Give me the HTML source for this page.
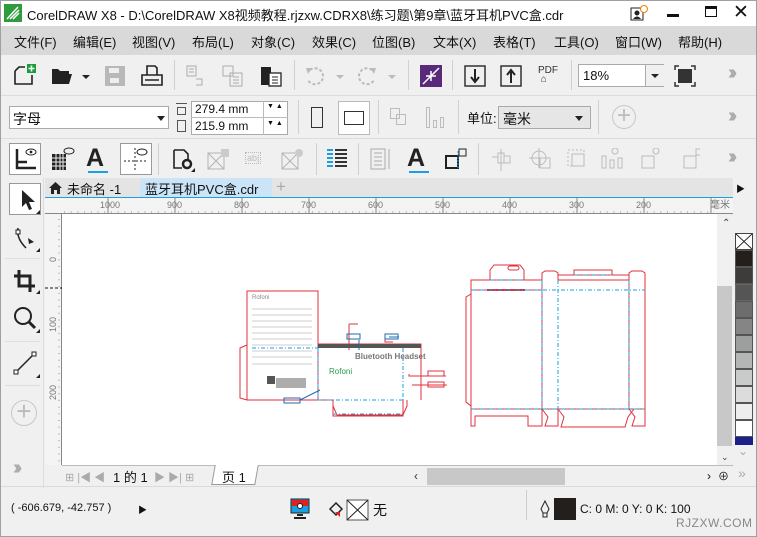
<!DOCTYPE html>
<html><head><meta charset="utf-8"><style>
*{margin:0;padding:0;box-sizing:border-box}
body{width:757px;height:537px;overflow:hidden;background:#f0f0f0;font-family:"Liberation Sans","Noto Sans CJK SC",sans-serif;font-size:12px;color:#111;position:relative}
.a{position:absolute}
.menu span{position:absolute;top:6px;font-size:13px}
.sep{position:absolute;width:1px;background:#d0d0d0}
.ic{position:absolute}
.chev{position:absolute;color:#aaa;font-size:20px;font-weight:bold;letter-spacing:-4px}
</style></head><body>
<div class="a" style="left:0;top:0;width:757px;height:537px;border:1px solid #a0a0a0"></div>
<!-- title -->
<div class="a" style="left:1px;top:1px;width:755px;height:25px;background:#fff"></div>
<svg class="a" style="left:4px;top:4px" width="18" height="18"><rect width="18" height="18" fill="#2e9c3c"/><path d="M3 15 L14 3 M6 15 L15 6 M9 15 L15 9" stroke="#fff" stroke-width="1.5"/></svg>
<div class="a" style="left:27px;top:5px;font-size:13px">CorelDRAW X8 - D:\CorelDRAW X8视频教程.rjzxw.CDRX8\练习题\第9章\蓝牙耳机PVC盒.cdr</div>
<svg class="a" style="left:630px;top:5px" width="20" height="17"><rect x="1" y="3" width="12" height="12" fill="none" stroke="#222"/><circle cx="7" cy="8" r="2.5" fill="#222"/><path d="M3 14 Q7 9 11 14Z" fill="#222"/><circle cx="14" cy="4" r="3.5" fill="#fff" stroke="#f08000"/></svg>
<div class="a" style="left:667px;top:14px;width:12px;height:3px;background:#111"></div>
<div class="a" style="left:705px;top:6px;width:12px;height:11px;border:1.5px solid #111;border-top-width:3px"></div>
<div class="a" style="left:733px;top:1px;font-size:19px">✕</div>
<!-- menu -->
<div class="a menu" style="left:1px;top:26px;width:755px;height:29px;background:#d9d9d9">
<span style="left:13px">文件(F)</span><span style="left:72px">编辑(E)</span><span style="left:131px">视图(V)</span><span style="left:191px">布局(L)</span><span style="left:250px">对象(C)</span><span style="left:311px">效果(C)</span><span style="left:371px">位图(B)</span><span style="left:432px">文本(X)</span><span style="left:492px">表格(T)</span><span style="left:553px">工具(O)</span><span style="left:614px">窗口(W)</span><span style="left:677px">帮助(H)</span></div>
<div class="a" style="left:1px;top:95px;width:755px;height:1px;background:#dcdcdc"></div>
<div class="a" style="left:1px;top:138px;width:755px;height:1px;background:#dcdcdc"></div>
<!-- toolbar 1 -->
<svg class="a" style="left:12px;top:63px" width="26" height="24"><path d="M3 8 L7 4 H13 M3 8 V21 H20 V12" fill="none" stroke="#222" stroke-width="1.6"/><rect x="15" y="1" width="9" height="9" fill="#1a9e3a"/><path d="M19.5 2.5v6M16.5 5.5h6" stroke="#fff" stroke-width="1.6"/></svg>
<svg class="a" style="left:50px;top:65px" width="42" height="22"><path d="M2 4 H8 L10 6 H19 V9 H6 L2 19Z M2 19 L6 9 H22 L19 19Z" fill="#222"/><path d="M32 10 h8 l-4 4z" fill="#222"/></svg>
<svg class="a" style="left:104px;top:65px" width="22" height="22"><rect x="1" y="1" width="20" height="20" fill="#b8b8b8"/><rect x="5" y="3" width="10" height="5" fill="#eee"/><rect x="6" y="13" width="9" height="5" fill="#eee"/></svg>
<svg class="a" style="left:140px;top:64px" width="24" height="24"><path d="M7 11 V2 H15 L17 4 V11 M2 11 H22 V21 H2Z M5 16 H19" fill="none" stroke="#222" stroke-width="1.6"/></svg>
<div class="sep" style="left:174px;top:60px;height:30px"></div>
<svg class="a" style="left:186px;top:65px" width="20" height="22" opacity=".35"><path d="M1 1h9v10h-9zM3 4h5M3 7h5M10 14h6v6h-6" fill="none" stroke="#333"/></svg>
<svg class="a" style="left:222px;top:65px" width="22" height="22" opacity=".35"><path d="M1 1h10v10h-10zM8 8h12v13h-12zM11 12h6M11 15h6M11 18h6" fill="none" stroke="#333"/></svg>
<svg class="a" style="left:260px;top:64px" width="22" height="24"><path d="M1 3h10v18h-10z" fill="#222"/><rect x="9" y="9" width="12" height="13" fill="#fff" stroke="#222" stroke-width="1.3"/><path d="M12 13h6M12 16h6M12 19h6" stroke="#222"/></svg>
<div class="sep" style="left:294px;top:60px;height:30px"></div>
<svg class="a" style="left:304px;top:66px" width="44" height="22" opacity=".3"><path d="M6 4 A8 8 0 1 1 4 14" fill="none" stroke="#444" stroke-width="2" stroke-dasharray="3 2"/><path d="M2 2 L8 2 L4 8z" fill="#444"/><path d="M32 9h8l-4 4z" fill="#444"/></svg>
<svg class="a" style="left:356px;top:66px" width="44" height="22" opacity=".3"><path d="M16 4 A8 8 0 1 0 18 14" fill="none" stroke="#444" stroke-width="2" stroke-dasharray="3 2"/><path d="M20 2 L14 2 L18 8z" fill="#444"/><path d="M32 9h8l-4 4z" fill="#444"/></svg>
<div class="sep" style="left:408px;top:60px;height:30px"></div>
<svg class="a" style="left:420px;top:65px" width="22" height="22"><rect width="22" height="22" fill="#5a2a7a"/><path d="M3 19 L19 3 M11 11 h-5 M11 11 v5 M11 11 h5 M11 11 v-5" stroke="#fff" stroke-width="1.5"/></svg>
<div class="sep" style="left:452px;top:60px;height:30px"></div>
<svg class="a" style="left:464px;top:64px" width="22" height="24"><rect x="1" y="2" width="20" height="20" fill="none" stroke="#333" stroke-width="1.5"/><path d="M11 5v12M7 13l4 5 4-5" fill="none" stroke="#222" stroke-width="2"/></svg>
<svg class="a" style="left:500px;top:64px" width="22" height="24"><rect x="1" y="2" width="20" height="20" fill="none" stroke="#333" stroke-width="1.5"/><path d="M11 19V7M7 11l4-5 4 5" fill="none" stroke="#222" stroke-width="2"/></svg>
<div class="a" style="left:538px;top:66px;font-size:10px;line-height:9px;color:#333">PDF<br>&nbsp;⌂</div>
<div class="sep" style="left:571px;top:60px;height:30px"></div>
<div class="a" style="left:578px;top:64px;width:86px;height:23px;background:#fff;border:1px solid #aaa"><span style="position:absolute;left:4px;top:3px;font-size:13px">18%</span><div style="position:absolute;left:66px;top:0;width:19px;height:21px;border-left:1px solid #aaa;background:#f0f0f0"></div><div style="position:absolute;left:72px;top:9px;border:4px solid transparent;border-top:4px solid #222"></div></div>
<svg class="a" style="left:674px;top:65px" width="22" height="22"><rect x="4" y="4" width="14" height="14" fill="#333"/><path d="M1 5V1h4M17 1h4v4M21 17v4h-4M5 21H1v-4" fill="none" stroke="#333" stroke-width="1.5"/></svg>
<div class="chev" style="left:728px;top:62px">››</div>
<!-- toolbar 2 -->
<div class="a" style="left:9px;top:106px;width:160px;height:23px;background:#fff;border:1px solid #aaa"><span style="position:absolute;left:3px;top:2px;font-size:14px">字母</span><div style="position:absolute;left:147px;top:9px;border:4px solid transparent;border-top:5px solid #222"></div></div>
<div class="a" style="left:176px;top:103px;width:11px;height:12px;border:1px solid #555;border-width:1px 0 0 0"></div>
<div class="a" style="left:177px;top:107px;width:9px;height:8px;border:1px solid #555"></div>
<div class="a" style="left:177px;top:120px;width:9px;height:12px;border:1px solid #555"></div>
<div class="a" style="left:191px;top:101px;width:97px;height:34px;background:#fff;border:1px solid #aaa"></div>
<div class="a" style="left:191px;top:117px;width:97px;height:1px;background:#bbb"></div>
<div class="a" style="left:263px;top:101px;width:1px;height:34px;background:#bbb"></div>
<div class="a" style="left:195px;top:102px;font-size:12px">279.4 mm</div>
<div class="a" style="left:195px;top:119px;font-size:12px">215.9 mm</div>
<div class="a" style="left:267px;top:103px;font-size:7px">▼ ▲</div>
<div class="a" style="left:267px;top:120px;font-size:7px">▼ ▲</div>
<div class="sep" style="left:298px;top:100px;height:34px"></div>
<div class="a" style="left:311px;top:107px;width:12px;height:21px;border:1.5px solid #333"></div>
<div class="a" style="left:338px;top:101px;width:32px;height:34px;background:#fff;border:1px solid #bbb"></div>
<div class="a" style="left:344px;top:111px;width:20px;height:14px;border:1.5px solid #333"></div>
<div class="sep" style="left:378px;top:100px;height:34px"></div>
<div class="a" style="left:390px;top:108px;width:10px;height:11px;border:1px solid #bbb"></div>
<div class="a" style="left:396px;top:114px;width:10px;height:11px;border:1px solid #bbb"></div>
<div class="a" style="left:426px;top:107px;width:4px;height:21px;border:1px solid #bbb"></div>
<div class="a" style="left:433px;top:120px;width:4px;height:8px;border:1px solid #bbb"></div>
<div class="a" style="left:440px;top:117px;width:4px;height:11px;border:1px solid #bbb"></div>
<div class="sep" style="left:458px;top:100px;height:34px"></div>
<div class="a" style="left:467px;top:108px;font-size:13px">单位:</div>
<div class="a" style="left:498px;top:106px;width:93px;height:23px;background:#e6e6e6;border:1px solid #aaa"><span style="position:absolute;left:4px;top:2px;font-size:14px">毫米</span><div style="position:absolute;left:76px;top:9px;border:4px solid transparent;border-top:5px solid #222"></div></div>
<div class="sep" style="left:598px;top:100px;height:34px"></div>
<div class="a" style="left:612px;top:105px;width:24px;height:24px;border:1.5px solid #c8c8c8;border-radius:50%;color:#bbb;font-size:24px;line-height:19px;text-align:center">+</div>
<div class="chev" style="left:728px;top:105px">››</div>
<!-- toolbar 3 -->
<div class="a" style="left:9px;top:143px;width:32px;height:32px;background:#fff;border:1px solid #999"></div>
<svg class="a" style="left:14px;top:146px" width="26" height="26"><path d="M3 3v19h19M3 16h10" fill="none" stroke="#222" stroke-width="2.5"/><ellipse cx="17" cy="6" rx="5" ry="3" fill="none" stroke="#222"/><circle cx="17" cy="6" r="1.4" fill="#222"/></svg>
<svg class="a" style="left:50px;top:146px" width="26" height="26"><path d="M2 8h14v16h-14z" fill="#222"/><path d="M2 12h14M2 16h14M2 20h14M6 8v16M10 8v16M13 8v16" stroke="#f0f0f0"/><ellipse cx="19" cy="5" rx="5" ry="3" fill="none" stroke="#222"/></svg>
<div class="a" style="left:86px;top:145px;font-size:25px;font-weight:bold;color:#222;line-height:26px">A</div>
<div class="a" style="left:88px;top:171px;width:20px;height:2px;background:#1aa0e0"></div>
<div class="a" style="left:120px;top:143px;width:32px;height:32px;background:#fff;border:1px solid #999"></div>
<svg class="a" style="left:122px;top:146px" width="28" height="26"><path d="M13 2v24M2 15h22" stroke="#222" stroke-dasharray="2 2"/><ellipse cx="20" cy="6" rx="5" ry="3" fill="none" stroke="#222"/></svg>
<div class="sep" style="left:158px;top:143px;height:32px"></div>
<svg class="a" style="left:170px;top:146px" width="26" height="28"><path d="M4 4h10l4 4v5M4 4v18h8" fill="none" stroke="#222" stroke-width="1.6"/><circle cx="17" cy="18" r="4" fill="none" stroke="#222" stroke-width="2.5"/><path d="M21 26h4v-4z" fill="#222"/></svg>
<svg class="a" style="left:207px;top:148px" width="24" height="24" opacity=".35"><path d="M1 5h16v16h-16zM1 5l16 16M17 5l-16 16" fill="none" stroke="#444"/><rect x="14" y="1" width="8" height="8" fill="#888"/></svg>
<div class="a" style="left:245px;top:152px;font-size:9px;color:#bbb;border:1px dotted #bbb;padding:0 1px">ab|</div>
<svg class="a" style="left:281px;top:148px" width="24" height="24" opacity=".35"><path d="M1 5h16v16h-16zM1 5l16 16M17 5l-16 16" fill="none" stroke="#444"/><circle cx="18" cy="5" r="4" fill="#888"/></svg>
<div class="sep" style="left:316px;top:143px;height:32px"></div>
<svg class="a" style="left:326px;top:148px" width="22" height="22"><path d="M1 2h6M1 6h6M1 10h6M1 14h6M1 18h6" stroke="#1aa0e0" stroke-width="2"/><path d="M9 2h12M9 6h12M9 10h12M9 14h12M9 18h12" stroke="#333" stroke-width="2"/></svg>
<div class="sep" style="left:358px;top:143px;height:32px"></div>
<svg class="a" style="left:370px;top:148px" width="22" height="22" opacity=".4"><rect x="1" y="1" width="14" height="20" fill="none" stroke="#444"/><path d="M4 5h8M4 9h8M4 13h8M4 17h8M19 1v20" stroke="#444"/></svg>
<div class="a" style="left:407px;top:145px;font-size:25px;font-weight:bold;color:#222;line-height:26px">A</div>
<div class="a" style="left:409px;top:171px;width:20px;height:2px;background:#1aa0e0"></div>
<svg class="a" style="left:444px;top:147px" width="24" height="24"><rect x="2" y="9" width="12" height="12" fill="none" stroke="#222" stroke-width="2"/><rect x="15" y="2" width="7" height="7" fill="none" stroke="#222"/><path d="M14 4v18" stroke="#1aa0e0" stroke-dasharray="2 1"/></svg>
<div class="sep" style="left:478px;top:143px;height:32px"></div>
<svg class="a" style="left:490px;top:148px" width="210" height="24" opacity=".3" fill="none" stroke="#444"><path d="M8 5h6v10h-6zM14 8h6v7h-6zM2 9h6M11 1v22"/><circle cx="49" cy="10" r="7"/><path d="M49 0v20M39 10h20"/><rect x="50" y="10" width="10" height="10"/><rect x="78" y="2" width="16" height="16" stroke-dasharray="2 2"/><rect x="82" y="6" width="12" height="12"/><path d="M112 8h4v12h-4zM120 12h4v8h-4zM128 10h4v10h-4z"/><circle cx="125" cy="3" r="3"/><rect x="152" y="8" width="12" height="12"/><circle cx="166" cy="3" r="3"/><rect x="194" y="8" width="12" height="12"/><rect x="206" y="1" width="6" height="6"/></svg>
<div class="chev" style="left:728px;top:146px">››</div>
<!-- left toolbox -->
<div class="a" style="left:43px;top:178px;width:1px;height:310px;background:#ddd"></div>
<div class="a" style="left:9px;top:183px;width:32px;height:32px;background:#fff;border:1px solid #999"></div>
<svg class="a" style="left:18px;top:188px" width="22" height="26"><path d="M4 2v17l4-4 3 7 3-1-3-7h6z" fill="#222"/><path d="M22 22v4h-4z" fill="#222"/></svg>
<svg class="a" style="left:12px;top:224px" width="30" height="28"><path d="M6 4 Q4 14 14 24" fill="none" stroke="#222" stroke-width="1.5"/><rect x="4" y="6" width="4" height="4" fill="#fff" stroke="#222"/><path d="M16 14l6 4-5 2z" fill="#222"/><path d="M28 24v4h-4z" fill="#222"/></svg>
<div class="a" style="left:5px;top:258px;width:35px;height:1px;background:#ddd"></div>
<svg class="a" style="left:12px;top:268px" width="30" height="28"><path d="M7 2v16h16M2 8h16v16" fill="none" stroke="#222" stroke-width="3"/><path d="M28 22v4h-4z" fill="#222"/></svg>
<svg class="a" style="left:12px;top:305px" width="30" height="28"><circle cx="11" cy="11" r="8" fill="none" stroke="#222" stroke-width="2"/><path d="M17 17l6 6" stroke="#222" stroke-width="3"/><path d="M28 24v4h-4z" fill="#222"/></svg>
<div class="a" style="left:5px;top:341px;width:35px;height:1px;background:#ddd"></div>
<svg class="a" style="left:12px;top:350px" width="30" height="28"><path d="M4 22L22 4" stroke="#222" stroke-width="1.5"/><rect x="2" y="20" width="4" height="4" fill="#fff" stroke="#222"/><rect x="20" y="2" width="4" height="4" fill="#fff" stroke="#222"/><path d="M28 24v4h-4z" fill="#222"/></svg>
<div class="a" style="left:5px;top:385px;width:35px;height:1px;background:#ddd"></div>
<div class="a" style="left:11px;top:400px;width:26px;height:26px;border:1.5px solid #c8c8c8;border-radius:50%;color:#bbb;font-size:26px;line-height:21px;text-align:center">+</div>
<div class="chev" style="left:13px;top:457px">››</div>
<!-- tabs -->
<div class="a" style="left:45px;top:178px;width:688px;height:19px;background:#e4e4e4"></div>
<svg class="a" style="left:48px;top:181px" width="15" height="14"><path d="M1 7L7.5 1 14 7h-2v6H9V9H6v4H3V7z" fill="#222"/></svg>
<div class="a" style="left:67px;top:179px;font-size:13px">未命名 -1</div>
<div class="a" style="left:140px;top:178px;width:132px;height:19px;background:#cce4f7"></div>
<div class="a" style="left:145px;top:179px;font-size:13px">蓝牙耳机PVC盒.cdr</div>
<div class="a" style="left:276px;top:178px;color:#aaa;font-size:17px;line-height:18px">+</div>
<div class="a" style="left:45px;top:197px;width:688px;height:1px;background:#1aa0e0"></div>
<!-- rulers -->
<div class="a" style="left:45px;top:198px;width:688px;height:16px;background:#f4f4f4;border-bottom:1px solid #888"></div>
<div class="a" style="left:45px;top:214px;width:17px;height:251px;background:#f4f4f4;border-right:1px solid #888"></div>
<svg class="a" style="left:45px;top:198px" width="688" height="16" font-family="Liberation Sans" font-size="9" fill="#777">
<text x="55" y="10">1000</text><text x="122" y="10">900</text><text x="189" y="10">800</text><text x="256" y="10">700</text><text x="323" y="10">600</text><text x="390" y="10">500</text><text x="457" y="10">400</text><text x="524" y="10">300</text><text x="591" y="10">200</text><text x="665" y="10" font-size="10">毫米</text>
<path d="M63 0v16M130 0v16M197 0v16M264 0v16M331 0v16M398 0v16M465 0v16M532 0v16M599 0v16M666 0v16" stroke="#888"/>
<path d="M19 14h650" stroke="#888" stroke-dasharray="1 5.7"/></svg>
<svg class="a" style="left:45px;top:214px" width="17" height="251" font-family="Liberation Sans" font-size="9" fill="#777">
<text transform="translate(11,48) rotate(-90)">0</text><text transform="translate(11,118) rotate(-90)">100</text><text transform="translate(11,186) rotate(-90)">200</text>
<path d="M14 5v245" stroke="#888" stroke-dasharray="1 5.7"/><path d="M0 74h17" stroke="#111" stroke-dasharray="3 2"/></svg>
<!-- canvas -->
<div class="a" style="left:62px;top:214px;width:655px;height:251px;background:#fff"></div>
<svg class="a" style="left:62px;top:214px" width="655" height="251" fill="none">
<g stroke="#e0303c" stroke-width="1">
<path d="M185 77h71v109h-71zM185 131l-7 3v50l7 2"/>
<path d="M256 130h103v56"/>
<path d="M256 186h15v6l4 9h66l4-9v-6"/>
<path d="M271 186v16h70v-16"/>
<path d="M287 110v26M287 110h9M323 121v7h8M347 160v2h37M350 171h35"/>
</g>
<rect x="256" y="130" width="103" height="4" fill="#555"/>
<g stroke="#1aa0e0" stroke-dasharray="4 2 1 2">
<path d="M256 134v52M256 186h85M271 200h70M341 134v52M190 134h66"/>
</g>
<g stroke="#1a6eb0"><rect x="285" y="120" width="13" height="5"/><rect x="323" y="120" width="13" height="5"/><rect x="222" y="184" width="16" height="5"/><path d="M238 186l20-10M297 126v10M337 123h-10"/></g>
<g stroke="#e0303c"><rect x="366" y="157" width="16" height="5"/><rect x="366" y="168" width="16" height="5"/></g>
<text x="293" y="145" font-size="8" font-family="Liberation Sans" font-weight="bold" fill="#777">Bluetooth Headset</text>
<text x="267" y="160" font-size="8" font-family="Liberation Sans" fill="#2a9a4a">Rofoni</text>
<text x="190" y="85" font-size="6" font-family="Liberation Sans" fill="#888">Rofoni</text>
<g stroke="#999" stroke-width=".6"><path d="M190 95h60M190 101h60M190 107h60M190 113h60M190 119h60M190 125h60M190 131h60M190 137h60M190 143h60M190 150h60"/></g>
<g stroke="#333" stroke-width=".8"><path d="M215 164v10M217 164v10M219 164v10M221 164v10M223 164v10M225 164v10M227 164v10M229 164v10M231 164v10M233 164v10M235 164v10M237 164v10M239 164v10M241 164v10M243 164v10"/></g>
<rect x="205" y="162" width="8" height="8" fill="#555"/>
<g stroke="#e0303c">
<path d="M409 66h71v129h-71zM409 76h71"/>
<path d="M409 80l-5 3v105l5 4"/>
<path d="M428 66v-10l4-5h26l4 5v10"/>
<path d="M480 66v-7l3-2h10l3 2v7M480 195h16M496 66h71M496 195h71v-129"/>
<path d="M512 61v-5h38v5M496 61h71"/>
<path d="M567 66v-7l3-2h10l3 2v7M583 66v129h-16"/>
<path d="M409 195v17h4v-10h53v10h14v-17"/>
<path d="M480 195l6 8-3 9h13v-17M496 195l6 8-3 10h64l3-10 6-8M567 195l6 8-3 9h13v-17"/>
<rect x="446" y="52" width="11" height="4" rx="2"/>
</g>
<path d="M425 76h38" stroke="#e0303c" stroke-width="2"/>
<g stroke="#1aa0e0" stroke-dasharray="4 2 1 2"><path d="M409 76h174M409 195h174M480 66v129M496 66v129M567 66v129M428 66h34M512 61h38"/></g>
</svg>
<!-- right scrollbar & palette -->
<div class="a" style="left:717px;top:214px;width:16px;height:251px;background:#f0f0f0"></div>
<div class="a" style="left:722px;top:218px;color:#444;font-size:10px">⌃</div>
<div class="a" style="left:717px;top:286px;width:15px;height:160px;background:#c8c8c8"></div>
<div class="a" style="left:721px;top:452px;color:#444;font-size:9px">⌄</div>
<div class="a" style="left:736px;top:182px;color:#111;font-size:9px">▶</div>
<div class="a" style="left:735px;top:233px;width:18px;height:17px;background:#fff;border:1px solid #444"><svg width="16" height="15"><path d="M0 0L16 15M16 0L0 15" stroke="#222"/></svg></div>
<div class="a" style="left:735px;top:250px;width:18px;">
<div style="height:17px;background:#231f1c;border:1px solid #555"></div><div style="height:17px;background:#3e3b3b;border:1px solid #555"></div><div style="height:17px;background:#555;border:1px solid #666"></div><div style="height:17px;background:#6d6d6d;border:1px solid #555"></div><div style="height:17px;background:#858585;border:1px solid #555"></div><div style="height:17px;background:#9d9e9e;border:1px solid #555"></div><div style="height:17px;background:#b4b5b5;border:1px solid #555"></div><div style="height:17px;background:#c9caca;border:1px solid #555"></div><div style="height:17px;background:#dcdcdc;border:1px solid #555"></div><div style="height:17px;background:#eeeeee;border:1px solid #555"></div><div style="height:17px;background:#fff;border:1px solid #555"></div><div style="height:8px;background:#1f1f8a"></div></div>
<div class="a" style="left:738px;top:444px;color:#aaa;font-size:12px">⌄</div>
<div class="a" style="left:738px;top:465px;color:#aaa;font-size:14px">»</div>
<!-- page bar -->
<div class="a" style="left:62px;top:465px;width:671px;height:20px;background:#f0f0f0;border-top:1px solid #bbb"></div>
<div class="a" style="left:65px;top:469px;font-size:11px;color:#aaa">⊞ |◀ ◀</div>
<div class="a" style="left:113px;top:467px;font-size:13px">1 的 1</div>
<div class="a" style="left:154px;top:469px;font-size:11px;color:#aaa">▶ ▶| ⊞</div>
<div class="a" style="left:213px;top:465px;width:44px;height:20px;background:#fff;border:1px solid #999;border-top:none;transform:skewX(-10deg)"></div>
<div class="a" style="left:222px;top:467px;font-size:13px">页 1</div>
<div class="a" style="left:414px;top:469px;font-size:12px;color:#333">‹</div>
<div class="a" style="left:427px;top:468px;width:138px;height:17px;background:#c8c8c8"></div>
<div class="a" style="left:707px;top:469px;font-size:12px">›</div>
<div class="a" style="left:718px;top:468px;font-size:11px">⊕</div>
<!-- status -->
<div class="a" style="left:1px;top:486px;width:755px;height:1px;background:#dadada"></div>
<div class="a" style="left:11px;top:502px;font-size:11px">( -606.679, -42.757 )</div>
<div class="a" style="left:138px;top:503px;font-size:9px">▶</div>
<svg class="a" style="left:290px;top:498px" width="20" height="22"><rect x="1" y="1" width="18" height="14" fill="#1aa0e0" stroke="#222"/><rect x="2" y="2" width="16" height="6" fill="#e02020"/><circle cx="10" cy="8" r="2.5" fill="#fff" stroke="#222"/><path d="M7 17h6M4 20h12" stroke="#222" stroke-width="2"/></svg>
<svg class="a" style="left:328px;top:499px" width="42" height="22"><path d="M2 10l6-6 6 6-6 6z" fill="none" stroke="#222" stroke-width="1.5"/><path d="M7 13l5 5v-5z" fill="#e02020"/><rect x="19" y="1" width="21" height="20" fill="#fff" stroke="#555"/><path d="M19 1l21 20M40 1l-21 20" stroke="#222"/></svg>
<div class="a" style="left:373px;top:500px;font-size:14px">无</div>
<div class="a" style="left:526px;top:490px;width:1px;height:30px;background:#ccc"></div>
<svg class="a" style="left:539px;top:500px" width="12" height="18"><path d="M6 1l4 8-2 4h-4l-2-4z M4 13v4h4v-4" fill="none" stroke="#222"/></svg>
<div class="a" style="left:554px;top:498px;width:22px;height:22px;background:#231f1c"></div>
<div class="a" style="left:580px;top:502px;font-size:12px">C: 0 M: 0 Y: 0 K: 100</div>
<div class="a" style="left:676px;top:516px;font-size:12px;color:#888;letter-spacing:.5px">RJZXW.COM</div>
</body></html>
